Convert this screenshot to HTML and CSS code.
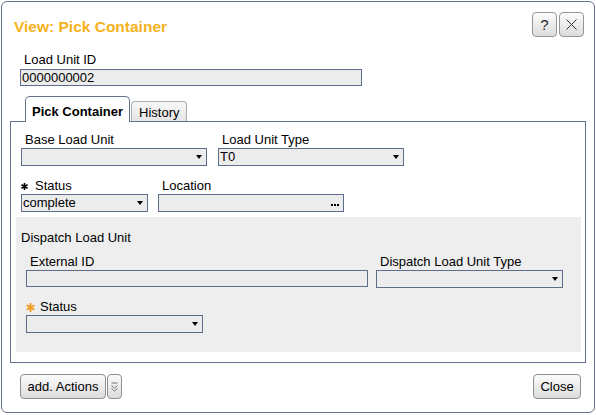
FILE: index.html
```html
<!DOCTYPE html>
<html>
<head>
<meta charset="utf-8">
<link rel="stylesheet" href="styles.css">
</head>
<body>
<div class="dialog">
  <div class="header">
    <h1 class="title">View: Pick Container</h1>
    <div class="tools">
      <button class="tool-btn help">?</button>
      <button class="tool-btn">
        <svg width="11" height="11" viewBox="0 0 11 11"><path d="M0.5 0.5 L10.5 10.5 M10.5 0.5 L0.5 10.5" stroke="#333" stroke-width="1" fill="none"/></svg>
      </button>
    </div>
  </div>

  <div class="top-field">
    <div class="lbl">Load Unit ID</div>
    <div class="input luid">0000000002</div>
  </div>

  <div class="tabs">
    <div class="tab active">Pick Container</div>
    <div class="tab">History</div>
  </div>

  <div class="panel">
    <div class="row row1">
      <div class="field">
        <div class="lbl">Base Load Unit</div>
        <div class="select w186"><span class="val"></span><span class="arrow"></span></div>
      </div>
      <div class="field">
        <div class="lbl">Load Unit Type</div>
        <div class="select w186"><span class="val">T0</span><span class="arrow"></span></div>
      </div>
    </div>
    <div class="row row2">
      <div class="field">
        <div class="lbl req"><svg class="star" width="7" height="7" viewBox="0 0 7 7"><path d="M3.5 0 V7 M0.47 1.75 L6.53 5.25 M0.47 5.25 L6.53 1.75" stroke="#000" stroke-width="1.6"/></svg><span>Status</span></div>
        <div class="select w127"><span class="val">complete</span><span class="arrow"></span></div>
      </div>
      <div class="field">
        <div class="lbl">Location</div>
        <div class="select w186"><span class="val"></span><span class="dots"><i></i><i></i><i></i></span></div>
      </div>
    </div>

    <div class="group">
      <div class="group-title">Dispatch Load Unit</div>
      <div class="row grow1">
        <div class="field">
          <div class="lbl">External ID</div>
          <div class="input w342"></div>
        </div>
        <div class="field">
          <div class="lbl">Dispatch Load Unit Type</div>
          <div class="select w187"><span class="val"></span><span class="arrow"></span></div>
        </div>
      </div>
      <div class="row grow2">
        <div class="field">
          <div class="lbl req orange"><svg class="star big" width="9" height="9" viewBox="0 0 9 9"><path d="M4.5 0 V9 M0.6 2.25 L8.4 6.75 M0.6 6.75 L8.4 2.25" stroke="#f39a1c" stroke-width="1.8"/></svg><span>Status</span></div>
          <div class="select w177"><span class="val"></span><span class="arrow"></span></div>
        </div>
      </div>
    </div>
  </div>

  <div class="footer">
    <div class="left-btns">
      <button class="btn actions">add. Actions</button>
      <button class="btn drop">
        <svg width="7" height="10" viewBox="0 0 7 10"><path d="M0.5 1 H6.5 M0.5 3.5 L3.5 6 L6.5 3.5 M0.5 6.5 L3.5 9 L6.5 6.5" stroke="#666" stroke-width="0.9" fill="none"/></svg>
      </button>
    </div>
    <button class="btn close">Close</button>
  </div>
</div>
</body>
</html>
```

FILE: styles.css
```css
* { box-sizing: border-box; }

body {
  margin: 0;
  background: #fff;
  font-family: "Liberation Sans", Arial, sans-serif;
  font-size: 13px;
  color: #000;
}

.dialog {
  margin: 1px 0 0 1px;
  width: 594px;
  height: 412px;
  border: 1px solid #66728e;
  border-radius: 6px;
  background: #fff;
  display: flex;
  flex-direction: column;
}

.header {
  display: flex;
  justify-content: space-between;
  align-items: flex-start;
  padding: 10px 10px 0 12px;
}

.title {
  margin: 6px 0 0;
  font-size: 15.5px;
  line-height: 18px;
  font-weight: bold;
  color: #f5b21c;
}

.tools {
  display: flex;
  gap: 2px;
}

.tool-btn {
  width: 25px;
  height: 25px;
  padding: 0;
  border: 1px solid #959595;
  border-radius: 4px;
  background: linear-gradient(#fdfdfd, #dcdcdc);
  display: flex;
  align-items: center;
  justify-content: center;
  font-family: "Liberation Sans", Arial, sans-serif;
  font-size: 15px;
  color: #222;
}

.help { font-weight: normal; }

.lbl {
  line-height: 16px;
  height: 16px;
  padding-left: 4px;
  white-space: nowrap;
}

.top-field {
  margin: 15px 0 0 18px;
}

.input {
  height: 17px;
  border: 1px solid #5f6d8c;
  background: #ececec;
  padding-left: 1px;
  line-height: 15px;
}

.luid {
  margin-top: 1px;
  width: 342px;
}

.tabs {
  margin-top: 10px;
  display: flex;
  align-items: flex-end;
  padding-left: 23px;
  height: 25px;
}

.tab {
  height: 20px;
  padding: 3px 7px 0;
  line-height: 16px;
  border: 1px solid #a9aeb8;
  border-bottom: none;
  border-radius: 4px 4px 0 0;
  background: linear-gradient(#f8f8f8, #e4e4e4);
  margin-left: 1px;
}

.tab.active {
  position: relative;
  z-index: 1;
  height: 26px;
  margin-left: 0;
  margin-bottom: -1px;
  padding: 7px 6px 0;
  font-weight: bold;
  background: #fff;
  border-color: #66728e;
  border-radius: 5px 5px 0 0;
}

.panel {
  flex: 1;
  margin: 0 8px;
  border: 1px solid #66728e;
  padding: 10px 4px 10px 5px;
}

.row {
  display: flex;
  margin-left: 5px;
}

.row1 { gap: 11px; }
.row2 { gap: 10px; margin-top: 12px; }

.select {
  height: 18px;
  border: 1px solid #5f6d8c;
  background: #ececec;
  display: flex;
  align-items: center;
  padding: 0 4px 0 1px;
}

.val {
  flex: 1;
  line-height: 16px;
}

.arrow {
  width: 0;
  height: 0;
  border-left: 3.5px solid transparent;
  border-right: 3.5px solid transparent;
  border-top: 4px solid #000;
}

.dots {
  display: flex;
  gap: 1px;
  margin-top: 3px;
}

.dots i {
  width: 2px;
  height: 2px;
  background: #000;
}

.w186 { width: 186px; }
.w187 { width: 187px; }
.w127 { width: 127px; }
.w177 { width: 177px; }
.w342 { width: 342px; }

.req {
  padding-left: 0;
  display: flex;
  align-items: center;
}

.star {
  margin: 0 7px 0 0;
}

.star.big {
  margin: 0 5px 0 0;
}

.group {
  margin-top: 5px;
  background: #eeeeee;
  padding: 13px 0 19px 5px;
}

.group-title {
  line-height: 16px;
}

.grow1 {
  margin-top: 8px;
  gap: 8px;
}

.grow2 {
  margin-top: 11px;
}

.footer {
  display: flex;
  justify-content: space-between;
  align-items: center;
  padding: 11px 13px 13px 18px;
}

.left-btns {
  display: flex;
  gap: 1px;
}

.btn {
  height: 25px;
  border: 1px solid #8f8f8f;
  border-radius: 4px;
  background: linear-gradient(#fbfbfb, #dcdcdc);
  font-family: "Liberation Sans", Arial, sans-serif;
  font-size: 13px;
  color: #000;
  padding: 0;
}

.actions { width: 86px; }

.drop {
  width: 15px;
  display: flex;
  align-items: center;
  justify-content: center;
}

.close { width: 48px; }
```
